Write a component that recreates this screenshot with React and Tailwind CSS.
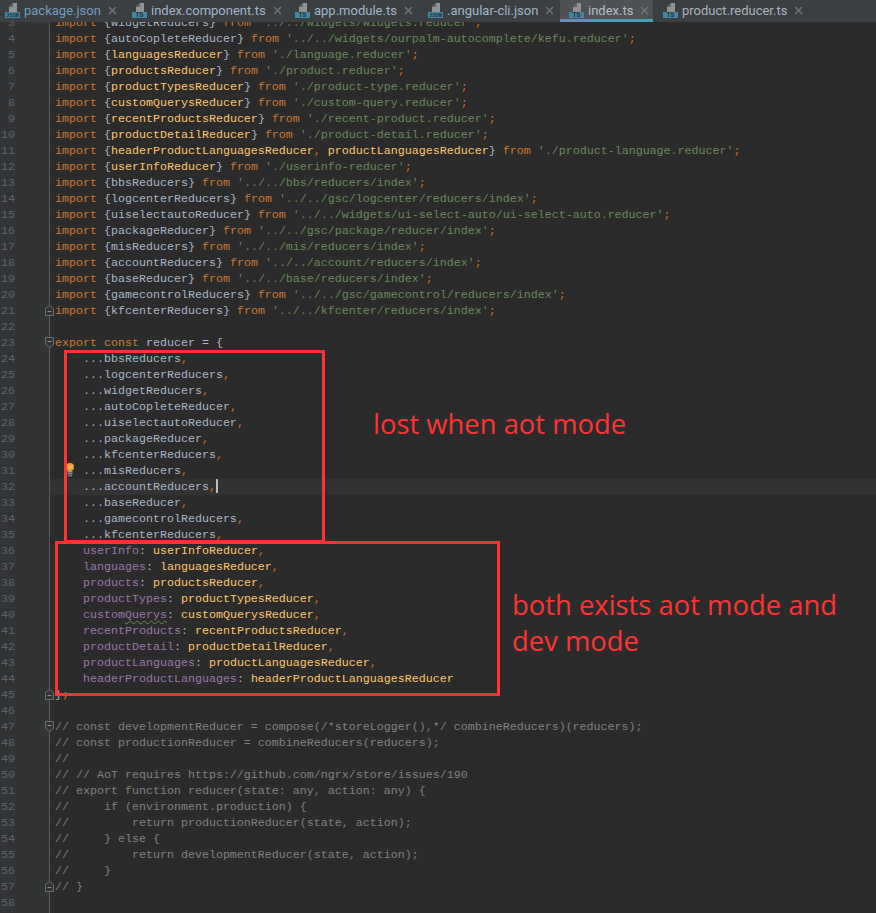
const K = "text-[#cc7832]", T = "text-[#a9b7c6]", Y = "text-[#ffc66d]", S = "text-[#6a8759]", P = "text-[#9876aa]", C = "text-[#808080]";

function imp(name, path, yellow, extra) {
  return [
    [K, "import "],
    [T, "{"],
    ...(extra ? [[Y, name], [K, ", "], [Y, extra]] : [[yellow ? Y : T, name]]),
    [T, "} "],
    [K, "from "],
    [S, "'" + path + "'"],
    [K, ";"],
  ];
}
const spread = (n) => [[T, "    ..." + n], [K, ","]];
const prop = (a, b, noComma) => [[P, "    " + a], [T, ": "], [Y, b], ...(noComma ? [] : [[K, ","]])];
const cm = (s) => [[C, s]];

const lines = [
  imp("widgetReducers", "../../widgets/widgets.reducer"),
  imp("autoCopleteReducer", "../../widgets/ourpalm-autocomplete/kefu.reducer"),
  imp("languagesReducer", "./language.reducer", true),
  imp("productsReducer", "./product.reducer", true),
  imp("productTypesReducer", "./product-type.reducer", true),
  imp("customQuerysReducer", "./custom-query.reducer", true),
  imp("recentProductsReducer", "./recent-product.reducer", true),
  imp("productDetailReducer", "./product-detail.reducer", true),
  imp("headerProductLanguagesReducer", "./product-language.reducer", true, "productLanguagesReducer"),
  imp("userInfoReducer", "./userinfo-reducer", true),
  imp("bbsReducers", "../../bbs/reducers/index"),
  imp("logcenterReducers", "../../gsc/logcenter/reducers/index"),
  imp("uiselectautoReducer", "../../widgets/ui-select-auto/ui-select-auto.reducer"),
  imp("packageReducer", "../../gsc/package/reducer/index"),
  imp("misReducers", "../../mis/reducers/index"),
  imp("accountReducers", "../../account/reducers/index"),
  imp("baseReducer", "../../base/reducers/index"),
  imp("gamecontrolReducers", "../../gsc/gamecontrol/reducers/index"),
  imp("kfcenterReducers", "../../kfcenter/reducers/index"),
  [],
  [[K, "export const "], [T, "reducer = {"]],
  spread("bbsReducers"),
  spread("logcenterReducers"),
  spread("widgetReducers"),
  spread("autoCopleteReducer"),
  spread("uiselectautoReducer"),
  spread("packageReducer"),
  spread("kfcenterReducers"),
  spread("misReducers"),
  spread("accountReducers"),
  spread("baseReducer"),
  spread("gamecontrolReducers"),
  spread("kfcenterReducers"),
  prop("userInfo", "userInfoReducer"),
  prop("languages", "languagesReducer"),
  prop("products", "productsReducer"),
  prop("productTypes", "productTypesReducer"),
  [[P, "    custom"], ["text-[#9876aa] underline decoration-wavy decoration-[#5f8f4f] decoration-1 underline-offset-2", "Querys"], [T, ": "], [Y, "customQuerysReducer"], [K, ","]],
  prop("recentProducts", "recentProductsReducer"),
  prop("productDetail", "productDetailReducer"),
  prop("productLanguages", "productLanguagesReducer"),
  prop("headerProductLanguages", "headerProductLanguagesReducer", true),
  [[T, "}"], [K, ";"]],
  [],
  cm("// const developmentReducer = compose(/*storeLogger(),*/ combineReducers)(reducers);"),
  cm("// const productionReducer = combineReducers(reducers);"),
  cm("//"),
  cm("// // AoT requires https://github.com/ngrx/store/issues/190"),
  cm("// export function reducer(state: any, action: any) {"),
  cm("//     if (environment.production) {"),
  cm("//         return productionReducer(state, action);"),
  cm("//     } else {"),
  cm("//         return developmentReducer(state, action);"),
  cm("//     }"),
  cm("// }"),
  [],
];

const foldDown = new Set([23, 47]);
const foldUp = new Set([21, 45, 57]);

function Fold({ up }) {
  return (
    <svg width="9" height="11" viewBox="0 0 9 11" className="absolute left-[45px] top-[2px]">
      <path
        d={up ? "M0.5 10.5V3.5L4.5 0.5L8.5 3.5V10.5Z" : "M0.5 0.5H8.5V7.5L4.5 10.5L0.5 7.5Z"}
        fill="#313335"
        stroke="#6b6e70"
      />
      <path d={up ? "M2.5 6.5H6.5" : "M2.5 4.5H6.5"} stroke="#8f9193" />
    </svg>
  );
}

function FileIcon({ label }) {
  return (
    <svg width="15" height="15" viewBox="0 0 15 15" className="shrink-0">
      <path d="M4 9V4L8 0H12V9Z" fill="#8f9395" />
      <path d="M4 4H8V0Z" fill="#5f6365" />
      <rect x="0" y="9" width="15" height="6" fill="#3f88a6" />
      <text
        x="7.5"
        y="14.4"
        textAnchor="middle"
        fontSize={label === "TS" ? "6.5" : "5.4"}
        fontWeight="700"
        fontFamily="'Liberation Mono', monospace"
        fill="#2b2f31"
      >
        {label}
      </text>
    </svg>
  );
}

const tabs = [
  { name: "package.json", icon: "JSON", w: "w-[127px] pl-[5px]", color: "text-[#6f9cc0]" },
  { name: "index.component.ts", icon: "TS", w: "w-[163px] pl-[5px]", color: "text-[#a0b6cc]" },
  { name: "app.module.ts", icon: "TS", w: "w-[133px] pl-[5px]", color: "text-[#a0b6cc]" },
  { name: ".angular-cli.json", icon: "JSON", w: "w-[137px] pl-[5px]", color: "text-[#a0b6cc]" },
  { name: "index.ts", icon: "TS", w: "w-[93px] pl-[9px] bg-[#4e5254]", color: "text-[#b4bcc4]", active: true },
  { name: "product.reducer.ts", icon: "TS", w: "w-[223px] pl-[10px]", color: "text-[#a9b4be]" },
];

function Tab({ t }) {
  return (
    <div className={"relative flex h-[22px] shrink-0 items-center gap-[4px] pb-[2px] " + t.w}>
      <FileIcon label={t.icon} />
      <span className={"whitespace-nowrap font-['Roboto',sans-serif] text-[13px] leading-none " + t.color}>{t.name}</span>
      <svg width="9" height="9" viewBox="0 0 9 9" className="ml-[3px] shrink-0">
        <path d="M1 1L8 8M8 1L1 8" stroke="#74787a" strokeWidth="1.2" />
      </svg>
      {t.active && <div className="absolute inset-x-0 bottom-0 h-[3px] bg-[#4a9cb8]" />}
    </div>
  );
}

export default function App() {
  return (
    <div className="relative flex h-[913px] w-[876px] flex-col overflow-hidden bg-[#2b2b2b] font-['Liberation_Mono',monospace] text-[11.67px] leading-[16px]">
      <div className="flex h-[22px] shrink-0 bg-[#3c3f41]">
        {tabs.map((t) => (
          <Tab key={t.name} t={t} />
        ))}
      </div>

      <div className="min-h-0 flex-1 overflow-hidden">
        <div className="-mt-[7px] flex min-h-[900px]">
          <div className="w-[50px] shrink-0 border-r border-[#555759] bg-[#313335]">
            {lines.map((_, i) => {
              const n = i + 3;
              return (
                <div key={n} className="relative h-[16px] text-[#606366]">
                  <div className="w-[15px] text-right">{n}</div>
                  {foldDown.has(n) && <Fold />}
                  {foldUp.has(n) && <Fold up />}
                </div>
              );
            })}
          </div>
          <div className="min-w-0 flex-1">
            {lines.map((segs, i) => {
              const n = i + 3;
              return (
                <div
                  key={n}
                  className={"relative h-[16px] whitespace-pre pl-[5px] " + (n === 32 ? "bg-[#323232]" : "")}
                >
                  {segs.map(([c, s], j) => (
                    <span key={j} className={c}>
                      {s}
                    </span>
                  ))}
                  {n === 32 && <div className="absolute left-[166px] top-0 h-[14px] w-[2px] bg-[#bbbbbb]" />}
                  {n === 31 && (
                    <svg width="8" height="14" viewBox="0 0 8 14" className="absolute left-[16px] top-[0px]">
                      <circle cx="4" cy="4" r="4" fill="#e8a33d" />
                      <path d="M2.5 3.5L3.5 5M5.5 3.5L4.5 5" stroke="#f7dc8a" />
                      <rect x="1.5" y="8" width="5" height="1.5" fill="#9a9a9a" />
                      <rect x="1.5" y="10" width="5" height="1.5" fill="#858585" />
                      <rect x="2" y="12" width="4" height="1.5" fill="#707070" />
                    </svg>
                  )}
                </div>
              );
            })}
          </div>
        </div>
      </div>

      <div className="absolute left-[64px] top-[350px] h-[193px] w-[261px] border-[3px] border-[#ff3333]" />
      <div className="absolute left-[55px] top-[541px] h-[155px] w-[445px] border-[3px] border-[#ff3333]" />
      <div className="absolute left-[373px] top-[406px] whitespace-nowrap font-['Open_Sans',sans-serif] text-[27.4px] leading-[36px] text-[#ff3333]">
        lost when aot mode
      </div>
      <div className="absolute left-[512px] top-[587px] w-[345px] font-['Open_Sans',sans-serif] text-[27.4px] leading-[36px] text-[#ff3333]">
        both exists aot mode and
        <br />
        dev mode
      </div>
    </div>
  );
}
